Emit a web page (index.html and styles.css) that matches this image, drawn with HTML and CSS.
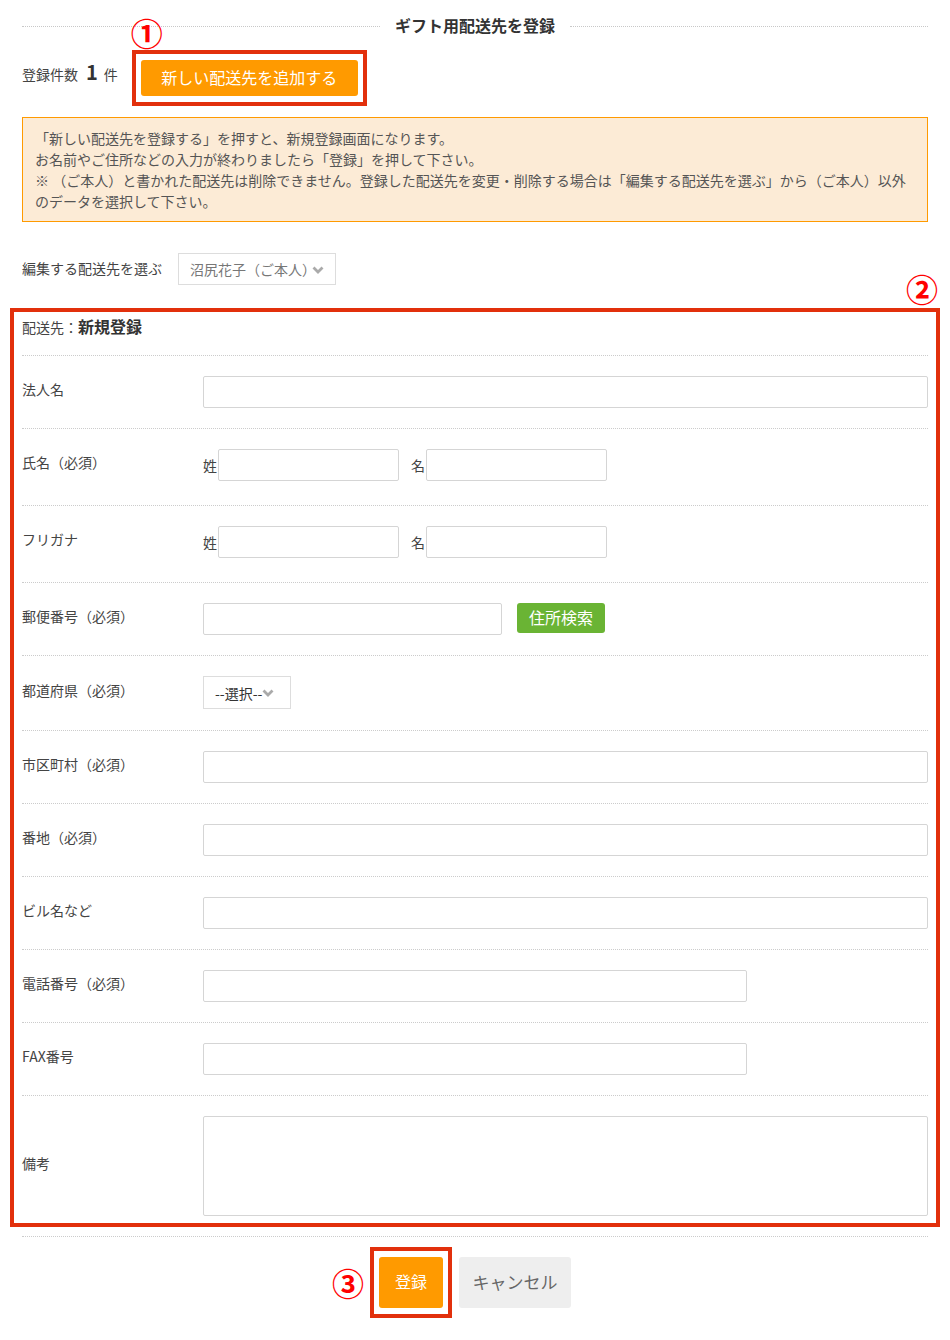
FILE: index.html
```html
<!DOCTYPE html>
<html lang="ja">
<head>
<meta charset="utf-8">
<title>ギフト用配送先を登録</title>
<link rel="stylesheet" href="styles.css">
</head>
<body>
<div class="page">
  <h1 class="title"><span>ギフト用配送先を登録</span></h1>

  <div class="count-row">
    <span class="count-text">登録件数<span class="count-num">1</span>件</span>
    <div class="add-wrap marked">
      <span class="mark mark-1">①</span>
      <button class="btn btn-orange btn-add" type="button">新しい配送先を追加する</button>
    </div>
  </div>

  <div class="notice">
    「新しい配送先を登録する」を押すと、新規登録画面になります。<br>
    お名前やご住所などの入力が終わりましたら「登録」を押して下さい。<br>
    ※ （ご本人）と書かれた配送先は削除できません。登録した配送先を変更・削除する場合は「編集する配送先を選ぶ」から（ご本人）以外<br>
    のデータを選択して下さい。
  </div>

  <div class="edit-row">
    <span class="edit-label">編集する配送先を選ぶ</span>
    <div class="fake-select edit-select">
      <span>沼尻花子（ご本人）</span>
      <svg class="chev" width="12" height="8" viewBox="0 0 12 8"><polyline points="1.5,1.5 6,6 10.5,1.5" fill="none" stroke="#aaaaaa" stroke-width="2.8"/></svg>
    </div>
  </div>

  <div class="form">
    <div class="annot-box"></div>
    <span class="mark mark-2">②</span>

    <div class="form-head">配送先：<b>新規登録</b></div>

    <div class="row">
      <div class="row-label">法人名</div>
      <input class="input w-full" type="text">
    </div>

    <div class="row tall">
      <div class="row-label">氏名（必須）</div>
      <span class="pre">姓</span><input class="input w-name gap-r" type="text">
      <span class="pre">名</span><input class="input w-name" type="text">
    </div>

    <div class="row tall">
      <div class="row-label">フリガナ</div>
      <span class="pre">姓</span><input class="input w-name gap-r" type="text">
      <span class="pre">名</span><input class="input w-name" type="text">
    </div>

    <div class="row">
      <div class="row-label">郵便番号（必須）</div>
      <input class="input w-zip" type="text">
      <button class="btn btn-green" type="button">住所検索</button>
    </div>

    <div class="row row-pref">
      <div class="row-label">都道府県（必須）</div>
      <div class="fake-select pref-select">
        <span>--選択--</span>
        <svg class="chev" width="12" height="8" viewBox="0 0 12 8"><polyline points="1.5,1.5 6,6 10.5,1.5" fill="none" stroke="#aaaaaa" stroke-width="2.8"/></svg>
      </div>
    </div>

    <div class="row">
      <div class="row-label">市区町村（必須）</div>
      <input class="input w-full" type="text">
    </div>

    <div class="row">
      <div class="row-label">番地（必須）</div>
      <input class="input w-full" type="text">
    </div>

    <div class="row">
      <div class="row-label">ビル名など</div>
      <input class="input w-full" type="text">
    </div>

    <div class="row">
      <div class="row-label">電話番号（必須）</div>
      <input class="input w-tel" type="text">
    </div>

    <div class="row">
      <div class="row-label">FAX番号</div>
      <input class="input w-tel" type="text">
    </div>

    <div class="row">
      <div class="row-label">備考</div>
      <textarea class="input textarea"></textarea>
    </div>
  </div>

  <div class="actions">
    <div class="submit-wrap marked">
      <span class="mark mark-3">③</span>
      <button class="btn btn-orange btn-submit" type="button">登録</button>
    </div>
    <button class="btn btn-cancel" type="button">キャンセル</button>
  </div>
</div>
</body>
</html>
```

FILE: styles.css
```css
html, body {
  margin: 0;
  padding: 0;
  background: #fff;
}

body {
  font-family: "Noto Sans CJK JP", "Noto Sans", sans-serif;
  font-size: 14px;
  color: #444;
}

.page {
  width: 906px;
  padding: 15px 22px 30px;
}

/* title */
.title {
  display: flex;
  align-items: center;
  gap: 15px;
  margin: 0;
  font-size: 16px;
  font-weight: bold;
  line-height: 20px;
  color: #333;
}
.title::before,
.title::after {
  content: "";
  flex: 1;
  border-top: 1px dotted #c8c8c8;
  margin-top: 2px;
}

/* count row */
.count-row {
  display: flex;
  align-items: center;
  margin-top: 25px;
  height: 36px;
}
.count-text {
  line-height: 20px;
  padding-bottom: 10px;
  color: #444;
}
.count-num {
  font-size: 20px;
  font-weight: bold;
  color: #333;
  margin: 0 6px 0 8px;
}
.add-wrap,
.submit-wrap {
  position: relative;
}
.add-wrap {
  margin-left: 23px;
}

.btn {
  border: none;
  border-radius: 3px;
  font-family: inherit;
  padding: 0;
  cursor: pointer;
}
.btn-orange {
  background: #ff9a00;
  color: #fff;
}
.btn-add {
  display: block;
  width: 217px;
  height: 36px;
  font-size: 16px;
  padding-bottom: 3px;
}

/* annotation frames */
.marked::after {
  content: "";
  position: absolute;
  left: -9px;
  right: -9px;
  top: -10px;
  bottom: -10px;
  border: 4px solid #e2300c;
  pointer-events: none;
}

.mark {
  position: absolute;
  color: #f00;
  font-weight: bold;
  font-size: 32px;
  line-height: 1;
  z-index: 2;
}
.mark-1 {
  left: -10px;
  top: -44px;
}

/* notice */
.notice {
  margin-top: 21px;
  background: #fcebd6;
  border: 1px solid #ff9a00;
  padding: 10px 12px 9px;
  line-height: 21px;
  font-size: 14px;
  color: #555;
  white-space: nowrap;
}

/* edit select */
.edit-row {
  display: flex;
  align-items: center;
  gap: 16px;
  margin-top: 31px;
}
.edit-label {
  padding-bottom: 2px;
}
.fake-select {
  box-sizing: border-box;
  height: 32px;
  border: 1px solid #ddd;
  display: flex;
  align-items: center;
  gap: 0;
  background: #fff;
}
.edit-select {
  width: 158px;
  padding: 0 0 0 11px;
  color: #777;
}
.edit-select .chev {
  margin-left: -4px;
}
.chev {
  flex: none;
  margin-top: 1px;
}

/* form */
.form {
  position: relative;
  margin-top: 27px;
}
.annot-box {
  position: absolute;
  left: -12px;
  right: -12px;
  top: -4px;
  bottom: 10px;
  border: 4px solid #e2300c;
  pointer-events: none;
  z-index: 1;
}
.mark-2 {
  right: -10px;
  top: -40px;
}
.form-head {
  padding: 4px 0 18px;
  line-height: 20px;
  border-bottom: 1px dotted #ccc;
  color: #444;
}
.form-head b {
  font-size: 16px;
  color: #333;
}

.row {
  display: flex;
  align-items: center;
  padding: 20px 0;
  border-bottom: 1px dotted #ccc;
}
.row.tall {
  padding-bottom: 24px;
}
.row.row-pref {
  padding-bottom: 21px;
}
.row-label {
  width: 181px;
  flex: none;
  padding-bottom: 6px;
  color: #444;
}
.pre {
  width: 15px;
  flex: none;
  color: #444;
}

.input {
  box-sizing: border-box;
  height: 32px;
  border: 1px solid #d5d5d5;
  border-radius: 2px;
  background: #fff;
  padding: 0 6px;
  font-family: inherit;
  font-size: 14px;
  margin: 0;
}
.w-full {
  flex: 1;
  min-width: 0;
}
.w-name {
  width: 181px;
}
.gap-r {
  margin-right: 12px;
}
.w-zip {
  width: 299px;
}
.w-tel {
  width: 544px;
}
.textarea {
  flex: 1;
  height: 100px;
  display: block;
  resize: none;
}

.btn-green {
  margin-left: 15px;
  width: 88px;
  height: 30px;
  background: #6ab434;
  color: #fff;
  font-size: 16px;
  align-self: flex-start;
  padding-bottom: 2px;
}

.pref-select {
  width: 88px;
  height: 33px;
  padding-left: 11px;
  color: #333;
}

/* actions */
.actions {
  display: flex;
  justify-content: center;
  gap: 16px;
  margin-top: 20px;
}
.btn-submit {
  width: 64px;
  height: 51px;
  font-size: 16px;
  display: block;
  padding-bottom: 3px;
}
.mark-3 {
  left: -47px;
  top: 9px;
}
.btn-cancel {
  width: 112px;
  height: 51px;
  background: #eee;
  color: #666;
  font-size: 17px;
  padding-bottom: 3px;
}
```
